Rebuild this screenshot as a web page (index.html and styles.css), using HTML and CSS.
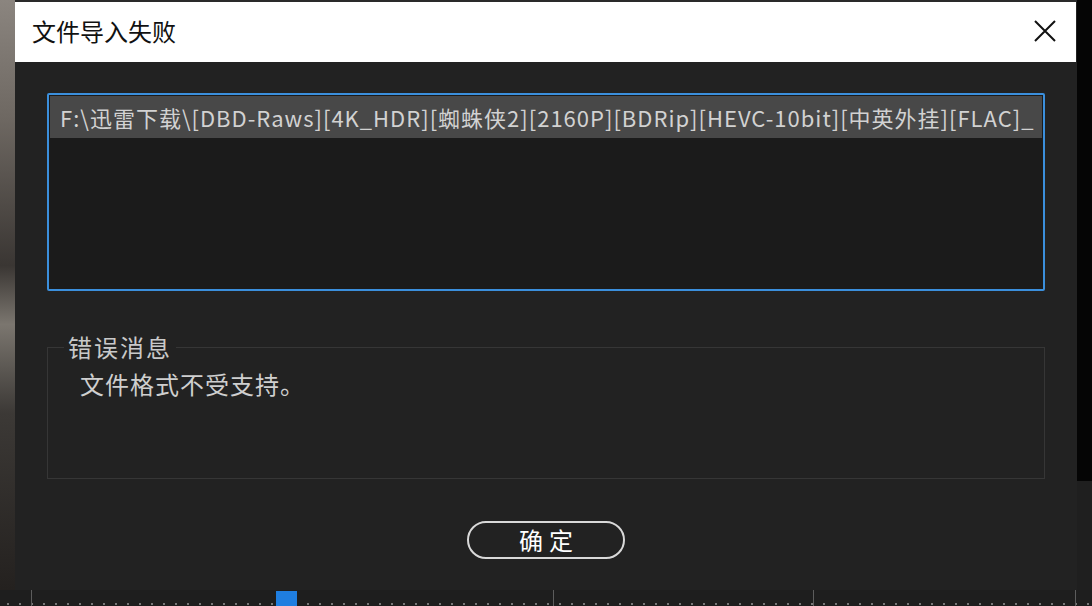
FILE: index.html
```html
<!DOCTYPE html>
<html lang="zh-CN">
<head>
    <meta charset="UTF-8">
    <meta name="viewport" content="width=device-width, initial-scale=1.0">
    <title>文件导入失败</title>
    <link rel="stylesheet" href="styles.css">
</head>
<body>
    <div class="screen">
        <div class="stage">
            <div class="backdrop-left"></div>
            <div class="dialog">
                <div class="titlebar">
                    <span class="title">文件导入失败</span>
                    <button class="close" aria-label="关闭">
                        <svg width="22" height="22" viewBox="0 0 22 22">
                            <path d="M1 1 L21 21 M21 1 L1 21" stroke="#111" stroke-width="2" fill="none"/>
                        </svg>
                    </button>
                </div>
                <div class="dialog-body">
                    <div class="file-list">
                        <div class="file-row selected">F:\迅雷下载\[DBD-Raws][4K_HDR][蜘蛛侠2][2160P][BDRip][HEVC-10bit][中英外挂][FLAC]_</div>
                    </div>
                    <fieldset class="error-box">
                        <legend>错误消息</legend>
                        <p class="error-text">文件格式不受支持。</p>
                    </fieldset>
                    <div class="actions">
                        <button class="ok">确定</button>
                    </div>
                </div>
            </div>
            <div class="backdrop-right"></div>
        </div>
        <div class="timeline">
            <span class="divider" style="left: 31px"></span>
            <span class="divider" style="left: 553px"></span>
            <span class="divider" style="left: 813px"></span>
            <span class="divider" style="left: 1075px"></span>
            <span class="playhead"></span>
        </div>
    </div>
</body>
</html>
```

FILE: styles.css
```css
body {
    margin: 0;
    background-color: #000;
    font-family: "Noto Sans CJK SC", "Noto Sans", sans-serif;
    overflow: hidden;
}
.screen {
    width: 1092px;
    height: 606px;
    display: flex;
    flex-direction: column;
}
.stage {
    display: flex;
    height: 590px;
}
.backdrop-left {
    width: 15px;
    background: linear-gradient(180deg, #8b857f 0%, #6e6862 20%, #3a3633 45%, #7b766f 55%, #3c3936 70%, #24211f 100%);
}
.backdrop-right {
    flex: 1;
    background: linear-gradient(180deg, #050505 0%, #050505 81.5%, #1f1f1f 81.5%);
}
.dialog {
    width: 1062px;
    display: flex;
    flex-direction: column;
    border-top: 2px solid #2a2a2a;
    background-color: #222222;
}
.titlebar {
    height: 60px;
    background-color: #fff;
    display: flex;
    align-items: center;
    justify-content: space-between;
    padding: 0 20px 0 17px;
    margin-right: 1px;
}
.title {
    font-size: 24px;
    color: #111;
    line-height: 1;
    margin-top: -2px;
}
.close {
    background: none;
    border: none;
    padding: 0;
    width: 22px;
    height: 22px;
    margin-top: -2px;
    cursor: pointer;
}
.dialog-body {
    flex: 1;
    padding: 31px 32px 0 32px;
    display: flex;
    flex-direction: column;
}
.file-list {
    height: 198px;
    box-sizing: border-box;
    border: 2px solid #3b8fdc;
    border-radius: 2px;
    background-color: #1b1b1b;
    padding: 1px;
}
.file-row {
    height: 42px;
    line-height: 42px;
    padding: 0 6px 0 10px;
    white-space: nowrap;
    overflow: hidden;
    font-size: 22px;
    letter-spacing: 1px;
    color: #d2d2d2;
}
.file-row.selected {
    background-color: #484848;
}
.error-box {
    margin: 43px 0 0 0;
    height: 145px;
    box-sizing: border-box;
    border: 1px solid #363636;
    padding: 0 0 0 16px;
}
.error-box legend {
    padding: 0 4px;
    font-size: 24px;
    line-height: 26px;
    letter-spacing: 2px;
    color: #c9c9c9;
}
.error-text {
    margin: 11px 0 0 16px;
    font-size: 24px;
    line-height: 26px;
    letter-spacing: 1px;
    color: #cfcfcf;
}
.actions {
    display: flex;
    justify-content: center;
    margin-top: 42px;
}
.ok {
    width: 158px;
    height: 38px;
    border: 2px solid #d9d9d9;
    border-radius: 19px;
    background: transparent;
    color: #fff;
    font-family: inherit;
    font-size: 24px;
    font-weight: 400;
    letter-spacing: 6px;
    text-indent: 6px;
    line-height: 1;
    cursor: pointer;
}
.timeline {
    position: relative;
    height: 16px;
    background-color: #1e1e1e;
    background-image: radial-gradient(circle, #777 0 1px, transparent 1.5px);
    background-size: 12px 4px;
    background-position: 2px 12px;
    background-repeat: repeat-x;
}
.divider {
    position: absolute;
    top: 0;
    bottom: 0;
    width: 1px;
    background-color: #5c5c5c;
}
.playhead {
    position: absolute;
    left: 276px;
    top: 1px;
    width: 21px;
    height: 15px;
    background-color: #1f7ee0;
}
```
